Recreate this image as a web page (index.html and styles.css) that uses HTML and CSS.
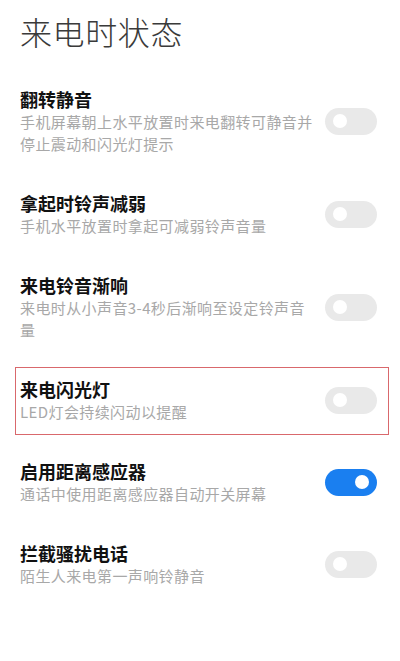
FILE: index.html
```html
<!DOCTYPE html>
<html lang="zh-CN">
<head>
<meta charset="utf-8">
<link rel="stylesheet" href="styles.css">
</head>
<body>
<div class="page">
  <h1 class="page-title">来电时状态</h1>
  <ul class="list">
    <li class="item">
      <div class="text">
        <div class="title">翻转静音</div>
        <div class="sub">手机屏幕朝上水平放置时来电翻转可静音并停止震动和闪光灯提示</div>
      </div>
      <span class="toggle"></span>
    </li>
    <li class="item">
      <div class="text">
        <div class="title">拿起时铃声减弱</div>
        <div class="sub">手机水平放置时拿起可减弱铃声音量</div>
      </div>
      <span class="toggle"></span>
    </li>
    <li class="item">
      <div class="text">
        <div class="title">来电铃音渐响</div>
        <div class="sub">来电时从小声音3-4秒后渐响至设定铃声音量</div>
      </div>
      <span class="toggle"></span>
    </li>
    <li class="item marked">
      <div class="text">
        <div class="title">来电闪光灯</div>
        <div class="sub">LED灯会持续闪动以提醒</div>
      </div>
      <span class="toggle"></span>
    </li>
    <li class="item">
      <div class="text">
        <div class="title">启用距离感应器</div>
        <div class="sub">通话中使用距离感应器自动开关屏幕</div>
      </div>
      <span class="toggle on"></span>
    </li>
    <li class="item">
      <div class="text">
        <div class="title">拦截骚扰电话</div>
        <div class="sub">陌生人来电第一声响铃静音</div>
      </div>
      <span class="toggle"></span>
    </li>
  </ul>
</div>
</body>
</html>
```

FILE: styles.css
```css
* { box-sizing: border-box; }
html, body {
  margin: 0;
  padding: 0;
  background: #ffffff;
}
body {
  font-family: "Noto Sans CJK SC", "Noto Sans", "DejaVu Sans", sans-serif;
  width: 400px;
  height: 661px;
  overflow: hidden;
}
.page {
  padding: 9px 23px 0 20px;
}
.page-title {
  margin: 0;
  font-size: 32px;
  line-height: 44px;
  font-weight: 300;
  color: #3a3a3a;
  letter-spacing: 0.6px;
}
.list {
  list-style: none;
  margin: 0;
  padding: 16px 0 0 0;
}
.item {
  position: relative;
  display: flex;
  align-items: center;
  gap: 12px;
  padding: 18px 0;
}
.text {
  flex: 1;
  min-width: 0;
}
.title {
  font-size: 18px;
  line-height: 24px;
  font-weight: 700;
  color: #111111;
}
.sub {
  font-size: 15px;
  line-height: 22px;
  color: #a8a8a8;
  letter-spacing: 0.4px;
}
.toggle {
  position: relative;
  flex: none;
  width: 52px;
  height: 27px;
  border-radius: 14px;
  background: #e9e9e9;
}
.toggle::after {
  content: "";
  position: absolute;
  top: 6.5px;
  left: 8px;
  width: 14px;
  height: 14px;
  border-radius: 50%;
  background: #ffffff;
}
.toggle.on {
  background: #1a7ff0;
}
.toggle.on::after {
  left: auto;
  right: 8px;
}
.marked::after {
  content: "";
  position: absolute;
  top: 8px;
  bottom: 6px;
  left: -5px;
  right: -12px;
  border: 1.5px solid #d9686c;
  pointer-events: none;
}
```
